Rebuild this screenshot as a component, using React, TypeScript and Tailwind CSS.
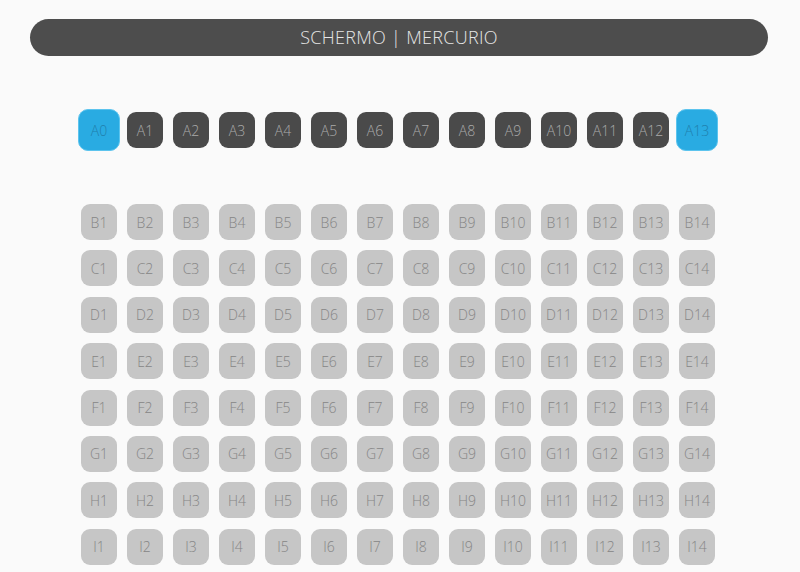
import React from 'react'

const cols = Array.from({ length: 14 }, (_, i) => i)
const rows = ['B', 'C', 'D', 'E', 'F', 'G', 'H', 'I']

function Seat({ label, kind }: { label: string; kind: 'free' | 'dark' | 'selected' }) {
  if (kind === 'selected') {
    return (
      <div className="w-[36px] h-[36px] flex items-center justify-center">
        <div className="shrink-0 w-[42px] h-[42px] rounded-[10px] bg-[#29abe2] border border-[#5cc4ee] flex items-center justify-center text-[14px] font-light text-[#1f7fad]">
          {label}
        </div>
      </div>
    )
  }
  const cls =
    kind === 'dark'
      ? 'bg-[#4a4a4a] text-[#ababab]'
      : 'bg-[#c6c6c6] text-[#858585]'
  return (
    <div className={`w-[36px] h-[36px] rounded-[9px] flex items-center justify-center text-[14px] font-light ${cls}`}>
      {label}
    </div>
  )
}

export default function App() {
  return (
    <div
      className="w-[800px] h-[572px] bg-[#fafafa] overflow-hidden"
      style={{ fontFamily: '"Open Sans", sans-serif' }}
    >
      <div className="px-[30px] pt-[19px]">
        <div className="w-[738px] h-[37px] rounded-full bg-[#4d4d4d] flex items-center justify-center text-[18px] font-light text-[#e6e6e6] tracking-[0.3px]">
          SCHERMO | MERCURIO
        </div>
      </div>

      <div className="w-[636px] ml-[81px] mt-[56px] grid grid-cols-[repeat(14,36px)] gap-[10px]">
        {cols.map((i) => (
          <Seat
            key={i}
            label={`A${i}`}
            kind={i === 0 || i === 13 ? 'selected' : 'dark'}
          />
        ))}
      </div>

      <div className="w-[636px] ml-[81px] mt-[56px] grid grid-cols-[repeat(14,36px)] gap-x-[10px] gap-y-[10.4px]">
        {rows.map((r) =>
          cols.map((i) => <Seat key={`${r}${i}`} label={`${r}${i + 1}`} kind="free" />)
        )}
      </div>
    </div>
  )
}
